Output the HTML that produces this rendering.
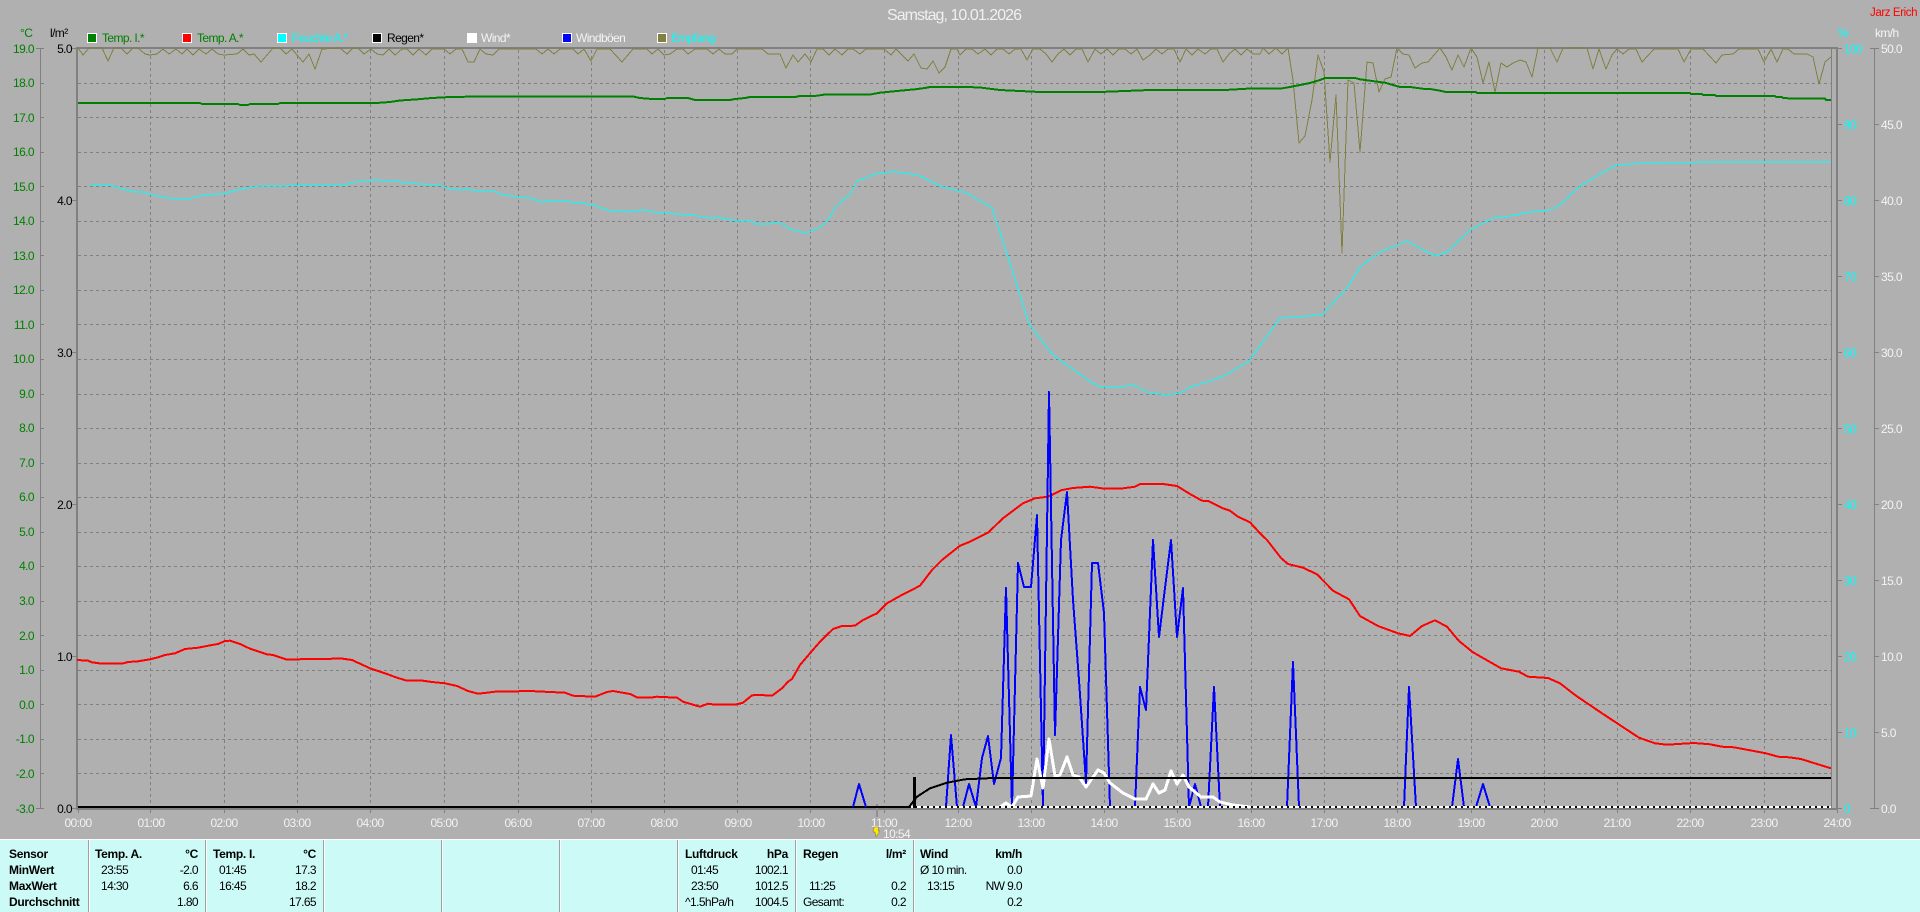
<!DOCTYPE html>
<html lang="de"><head><meta charset="utf-8"><title>Samstag, 10.01.2026</title>
<style>
html,body{margin:0;padding:0;background:#b0b0b0;width:1920px;height:912px;overflow:hidden}
svg{display:block}
text{font-family:"Liberation Sans",sans-serif;font-size:12px;letter-spacing:-.6px}
.b{font-weight:bold;font-size:12px;letter-spacing:-.3px;fill:#000}
.t{fill:#000}
.e{text-anchor:end}
.m{text-anchor:middle;fill:#f2f2f2}
.g{fill:#008000;text-anchor:end}
.k{fill:#000;text-anchor:end}
.c{fill:#0ff}
.w{fill:#f4f4f4}
polyline{fill:none;shape-rendering:crispEdges;stroke-linejoin:round}
</style></head><body>
<svg width="1920" height="912" viewBox="0 0 1920 912" xmlns="http://www.w3.org/2000/svg">
<rect width="1920" height="912" fill="#b0b0b0"/>
<text x="887" y="20" style="font-size:16px;letter-spacing:-.95px" fill="#f0f0f0">Samstag, 10.01.2026</text>
<text x="1870" y="16" style="font-size:11.5px;letter-spacing:-.4px" fill="#f00">Jarz Erich</text>

<text x="20" y="37" fill="#008000">°C</text>
<text x="50" y="37" fill="#000">l/m²</text>
<text x="1838" y="37" class="c">%</text>
<text x="1875" y="37" class="w">km/h</text>

<!-- legend -->
<g stroke="#fff" stroke-width="1" shape-rendering="crispEdges">
<rect x="87.5" y="33.5" width="9" height="9" fill="#008000"/>
<rect x="182.5" y="33.5" width="9" height="9" fill="#f00"/>
<rect x="277.5" y="33.5" width="9" height="9" fill="#0ff"/>
<rect x="372.5" y="33.5" width="9" height="9" fill="#000"/>
<rect x="467.5" y="33.5" width="9" height="9" fill="#fff"/>
<rect x="562.5" y="33.5" width="9" height="9" fill="#00f"/>
<rect x="657.5" y="33.5" width="9" height="9" fill="#808040"/>
</g>
<text x="102" y="42" fill="#008000">Temp. I.*</text>
<text x="197" y="42" fill="#008000">Temp. A.*</text>
<text x="292" y="42" class="c">Feuchte A.*</text>
<text x="387" y="42" fill="#000">Regen*</text>
<text x="481" y="42" class="w">Wind*</text>
<text x="576" y="42" class="w">Windböen</text>
<text x="671" y="42" class="c">Empfang</text>

<!-- grid -->
<path shape-rendering="crispEdges" stroke="#808080" stroke-width="1" stroke-dasharray="3 3" fill="none" d="M78 83.5H1831M78 117.5H1831M78 152.5H1831M78 186.5H1831M78 221.5H1831M78 255.5H1831M78 290.5H1831M78 324.5H1831M78 359.5H1831M78 394.5H1831M78 428.5H1831M78 463.5H1831M78 497.5H1831M78 532.5H1831M78 566.5H1831M78 601.5H1831M78 635.5H1831M78 670.5H1831M78 704.5H1831M78 739.5H1831M78 773.5H1831M150.5 50V808M224.5 50V808M297.5 50V808M370.5 50V808M444.5 50V808M518.5 50V808M591.5 50V808M664.5 50V808M737.5 50V808M810.5 50V808M884.5 50V808M958.5 50V808M1031.5 50V808M1104.5 50V808M1177.5 50V808M1251.5 50V808M1324.5 50V808M1397.5 50V808M1471.5 50V808M1544.5 50V808M1617.5 50V808M1690.5 50V808M1764.5 50V808"/>

<!-- axes -->
<g shape-rendering="crispEdges" fill="#808080">
<rect x="76" y="47" width="1762" height="2"/>
<rect x="76" y="47" width="2" height="762"/>
<rect x="76" y="808" width="1762" height="2"/>
<rect x="1831" y="48" width="1" height="760"/>
<rect x="1836" y="47" width="2" height="763"/>
<rect x="40" y="48" width="1" height="761"/>
<rect x="1874" y="48" width="1" height="761"/>
</g>
<path shape-rendering="crispEdges" stroke="#808080" fill="none" d="M36 48.5H44M40 83.5H44M40 117.5H44M40 152.5H44M40 186.5H44M40 221.5H44M40 255.5H44M40 290.5H44M40 324.5H44M40 359.5H44M40 394.5H44M40 428.5H44M40 463.5H44M40 497.5H44M40 532.5H44M40 566.5H44M40 601.5H44M40 635.5H44M40 670.5H44M40 704.5H44M40 739.5H44M40 773.5H44M36 808.5H44M72 48.5H76M72 200.5H76M72 352.5H76M72 504.5H76M72 656.5H76M72 808.5H76M1838 48.5H1842M1838 124.5H1842M1838 200.5H1842M1838 276.5H1842M1838 352.5H1842M1838 428.5H1842M1838 504.5H1842M1838 580.5H1842M1838 656.5H1842M1838 732.5H1842M1838 808.5H1842M1870 48.5H1879M1874 124.5H1879M1874 200.5H1879M1874 276.5H1879M1874 352.5H1879M1874 428.5H1879M1874 504.5H1879M1874 580.5H1879M1874 656.5H1879M1874 732.5H1879M1870 808.5H1879M78.5 810V813M150.5 810V813M224.5 810V813M297.5 810V813M370.5 810V813M444.5 810V813M518.5 810V813M591.5 810V813M664.5 810V813M737.5 810V813M810.5 810V813M884.5 810V813M958.5 810V813M1031.5 810V813M1104.5 810V813M1177.5 810V813M1251.5 810V813M1324.5 810V813M1397.5 810V813M1471.5 810V813M1544.5 810V813M1617.5 810V813M1690.5 810V813M1764.5 810V813M1837.5 810V813"/>
<rect x="876" y="804" width="2" height="13" fill="#909090" shape-rendering="crispEdges"/>

<!-- y labels: temperature -->
<text x="34" y="53" class="g">19.0</text><text x="34" y="87" class="g">18.0</text><text x="34" y="122" class="g">17.0</text><text x="34" y="156" class="g">16.0</text><text x="34" y="191" class="g">15.0</text><text x="34" y="225" class="g">14.0</text><text x="34" y="260" class="g">13.0</text><text x="34" y="294" class="g">12.0</text><text x="34" y="329" class="g">11.0</text><text x="34" y="363" class="g">10.0</text><text x="34" y="398" class="g">9.0</text><text x="34" y="432" class="g">8.0</text><text x="34" y="467" class="g">7.0</text><text x="34" y="501" class="g">6.0</text><text x="34" y="536" class="g">5.0</text><text x="34" y="570" class="g">4.0</text><text x="34" y="605" class="g">3.0</text><text x="34" y="640" class="g">2.0</text><text x="34" y="674" class="g">1.0</text><text x="34" y="709" class="g">0.0</text><text x="34" y="743" class="g">-1.0</text><text x="34" y="778" class="g">-2.0</text><text x="34" y="813" class="g">-3.0</text>
<!-- y labels: rain -->
<text x="72" y="53" class="k">5.0</text><text x="72" y="205" class="k">4.0</text><text x="72" y="357" class="k">3.0</text><text x="72" y="509" class="k">2.0</text><text x="72" y="661" class="k">1.0</text><text x="72" y="813" class="k">0.0</text>
<!-- y labels: humidity -->
<text x="1844" y="53" class="c">100</text><text x="1844" y="129" class="c">90</text><text x="1844" y="205" class="c">80</text><text x="1844" y="281" class="c">70</text><text x="1844" y="357" class="c">60</text><text x="1844" y="433" class="c">50</text><text x="1844" y="509" class="c">40</text><text x="1844" y="585" class="c">30</text><text x="1844" y="661" class="c">20</text><text x="1844" y="737" class="c">10</text><text x="1844" y="813" class="c">0</text>
<!-- y labels: wind -->
<text x="1881" y="53" class="w">50.0</text><text x="1881" y="129" class="w">45.0</text><text x="1881" y="205" class="w">40.0</text><text x="1881" y="281" class="w">35.0</text><text x="1881" y="357" class="w">30.0</text><text x="1881" y="433" class="w">25.0</text><text x="1881" y="509" class="w">20.0</text><text x="1881" y="585" class="w">15.0</text><text x="1881" y="661" class="w">10.0</text><text x="1881" y="737" class="w">5.0</text><text x="1881" y="813" class="w">0.0</text>
<!-- x labels -->
<text x="78" y="827" class="m">00:00</text><text x="151" y="827" class="m">01:00</text><text x="224" y="827" class="m">02:00</text><text x="297" y="827" class="m">03:00</text><text x="370" y="827" class="m">04:00</text><text x="444" y="827" class="m">05:00</text><text x="518" y="827" class="m">06:00</text><text x="591" y="827" class="m">07:00</text><text x="664" y="827" class="m">08:00</text><text x="738" y="827" class="m">09:00</text><text x="811" y="827" class="m">10:00</text><text x="884" y="827" class="m">11:00</text><text x="958" y="827" class="m">12:00</text><text x="1031" y="827" class="m">13:00</text><text x="1104" y="827" class="m">14:00</text><text x="1177" y="827" class="m">15:00</text><text x="1251" y="827" class="m">16:00</text><text x="1324" y="827" class="m">17:00</text><text x="1397" y="827" class="m">18:00</text><text x="1471" y="827" class="m">19:00</text><text x="1544" y="827" class="m">20:00</text><text x="1617" y="827" class="m">21:00</text><text x="1690" y="827" class="m">22:00</text><text x="1764" y="827" class="m">23:00</text><text x="1837" y="827" class="m">24:00</text>

<!-- Empfang -->
<polyline stroke="#808040" stroke-width="1" points="78,48 83,55 89,48 102,48 108,61 114,48 121,48 127,54 133,48 138,48 145,54 150,55 157,54 163,49 169,54 176,49 182,54 187,49 193,55 199,49 206,54 212,49 218,54 224,55 237,54 243,49 249,55 254,54 261,62 273,48 280,48 286,54 292,49 297,55 303,62 309,54 315,69 322,49 340,48 347,54 353,48 358,48 364,54 371,49 377,54 383,55 389,49 395,55 402,49 407,49 413,55 419,49 426,55 432,49 444,49 450,54 456,49 462,49 468,62 474,62 480,49 486,54 493,55 499,49 536,49 542,54 548,49 554,54 560,49 573,49 578,54 584,49 591,61 597,49 610,49 622,62 633,49 647,49 652,54 658,49 664,55 670,54 677,49 683,49 688,54 695,49 707,49 713,54 719,49 725,54 732,54 737,49 762,49 768,54 780,54 786,68 793,55 798,62 805,54 811,62 817,49 823,49 829,55 835,49 842,55 848,49 853,49 860,54 866,49 884,49 891,55 896,49 908,61 914,54 921,68 927,69 933,61 939,73 945,67 951,49 957,49 960,55 966,49 972,49 978,54 985,49 991,55 997,49 1003,49 1009,54 1015,49 1021,49 1027,60 1033,49 1040,49 1046,54 1052,62 1058,54 1064,49 1070,55 1076,49 1082,49 1088,62 1095,49 1101,54 1107,49 1113,55 1119,49 1125,49 1131,54 1137,49 1143,60 1150,55 1156,49 1162,54 1168,49 1174,49 1180,62 1186,49 1192,55 1198,49 1205,54 1211,49 1217,49 1223,62 1229,54 1235,49 1241,55 1247,49 1253,54 1260,54 1263,48 1269,54 1276,48 1282,54 1288,48 1293,80 1299,143 1305,136 1312,100 1318,55 1324,72 1330,162 1336,95 1342,253 1348,80 1354,83 1360,152 1367,62 1373,63 1379,92 1385,79 1391,77 1397,48 1403,54 1409,55 1415,68 1422,63 1428,62 1440,48 1446,57 1452,70 1458,55 1464,67 1471,48 1477,57 1483,83 1489,62 1495,92 1501,63 1507,67 1513,63 1520,60 1526,62 1532,77 1538,48 1550,48 1557,62 1563,48 1587,48 1593,69 1599,49 1606,69 1612,55 1617,49 1623,54 1629,49 1636,49 1642,62 1654,49 1678,49 1684,62 1691,49 1703,49 1716,63 1722,55 1733,54 1739,49 1758,49 1764,62 1771,49 1777,62 1783,49 1788,49 1794,54 1807,54 1813,57 1819,84 1825,62 1831,57"/>
<!-- Temp I -->
<polyline stroke="#008000" stroke-width="2" points="78,103 200,103 202,104 238,104 240,105 248,105 250,104 278,104 280,103 376,103 390,102 400,100.5 415,99.5 432,98 450,97 480,96.5 633,96.5 640,98 652,99 665,99 667,98 688,98 695,100 730,100 735,99 745,98 750,97 795,97 800,96 815,96 825,94.5 870,94.5 880,92.7 890,91.7 900,90.7 915,89.3 925,88 930,87 967,87 980,87.5 1000,90 1040,92 1100,92 1150,90 1225,90 1250,88.5 1280,88.7 1290,87 1300,85 1310,83 1320,80 1325,78 1355,78 1360,79.3 1370,80.7 1385,82.7 1393,85 1400,87 1410,87 1425,89 1430,89 1440,90.7 1446,92 1476,92 1477,93 1690,93 1691,94 1702,94 1703,95 1715,95 1716,96 1775,96 1776,97 1782,97 1783,98 1795,98.7 1825,98.7 1826,100 1831,100"/>
<!-- Temp A -->
<polyline stroke="#f00" stroke-width="2" points="77,660 88,660.7 92,662.3 102,663.7 122,663.7 128,662 138,661.3 150,659.3 158,657.3 165,655 175,653.3 185,649 198,647.7 212,645 218,644 225,641 230,640.7 240,644 250,648.7 267,654.3 273,655 287,659.7 297,659.3 335,658.7 340,658.3 352,660 370,668.3 385,673.3 397,677.7 407,680.7 420,680.3 432,682 445,683.3 457,686 468,691 478,693.7 487,692.7 495,691.7 512,691.7 517,691.3 530,691 550,692 565,692.7 573,695.7 595,696.7 607,692 613,691 630,694 637,697.3 653,697.3 657,696.7 677,697.7 683,701.7 700,706.7 708,703.7 715,704.7 735,704.7 743,702.7 752,695.3 760,695 772,695.7 782,688.3 788,681.7 792,679 800,665 810,653.3 820,641.7 833,629 842,626 855,625.7 863,620 877,613.3 887,603.3 900,596 920,585.7 932,570 942,560 960,545.7 970,541.7 988,532.7 1003,518.3 1023,503.3 1035,498.3 1048,496.7 1062,490 1073,488 1090,486.7 1105,488.7 1123,488.3 1135,486.7 1140,484 1163,484 1177,486 1190,494 1202,500.7 1208,501 1223,508.3 1230,510.7 1238,516.7 1250,522.3 1260,533.3 1267,540 1281,558 1288,564 1303,567.7 1317,574.3 1333,590.7 1349,599.3 1360,616 1378,626 1398,633.3 1410,636 1422,626 1435,620.3 1447,626.7 1459,641 1473,652.3 1501,668.3 1519,671.7 1528,676.7 1548,678 1560,683.3 1576,695.7 1602,713.3 1639,737.7 1655,743.3 1667,744.7 1694,743 1710,744.3 1722,746.7 1734,747.3 1766,753.3 1778,756.7 1789,757.3 1801,759 1817,764 1831,768.3"/>
<!-- Feuchte -->
<polyline stroke="#0ff" stroke-width="1" points="90,185.7 112,185.7 119,188 134,192 141,191.7 153,195 163,197.3 177,198.7 189,198.7 199,196 211,194.3 224,194 233,191 245,188.3 260,186 344,185.3 352,182.7 364,180.7 376,180 388,181.7 395,180.7 405,182.7 424,184.3 439,184.7 449,188.7 463,190 468,189 475,190.7 495,191.7 502,194.7 517,196.7 534,198.7 542,202.3 550,200.7 558,201.3 567,200.7 574,203.3 580,202 587,204.3 594,204.7 604,209.3 616,211.7 622,210 628,212.3 633,210.7 645,210 655,212.3 676,214 691,214.7 698,216 710,218.3 718,217.3 735,220.7 752,221.3 756,224.3 781,223.3 790,229 805,233 812,231 822,226 829,218.3 836,206.7 844,199 850,195 857,181 875,174 894,171.5 918,175 943,187 967,193 992,208 1010,263 1029,324 1053,355 1078,373 1088,380 1100,387 1120,387 1133,385 1147,392 1167,395 1180,393 1190,387 1213,380 1224,376 1249,361 1280,318 1322,315 1347,288 1352,280 1360,267 1380,252 1397,245 1407,241 1420,248 1435,256 1447,252 1470,230 1493,218 1510,216 1530,212 1550,210 1560,205 1580,186 1616,165 1647,163 1714,162 1831,162"/>
<!-- base rain -->
<path shape-rendering="crispEdges" stroke="#000" stroke-width="2" d="M78 807H909"/>
<!-- Windböen -->
<g stroke="#00f" stroke-width="2">
<polyline points="853,807 859,784 866,807"/>
<polyline points="946,807 951,735 957,807"/>
<polyline points="963,807 969,784 976,807 982,758 988,736 994,784 1001,758 1006,588 1012,807 1018,563 1024,587 1031,587 1037,515 1043,807 1049,392 1055,735 1061,540 1067,492 1073,600 1079,680 1086,783 1092,563 1098,563 1104,613 1110,807 1135,807 1140,687 1146,710 1153,540 1159,637 1165,588 1171,540 1177,637 1183,588 1189,807 1195,784 1201,807 1208,807 1214,687 1220,807 1245,807"/>
<polyline points="1287,807 1293,662 1299,807"/>
<polyline points="1404,807 1409,687 1416,807"/>
<polyline points="1452,807 1458,759 1464,807"/>
<polyline points="1476,807 1483,784 1490,807"/>
</g>
<!-- Wind -->
<polyline stroke="#fff" stroke-width="3" points="1000,807 1006,803 1012,807 1018,797 1031,796 1037,759 1043,788 1049,739 1055,776 1060,775 1067,757 1073,775 1079,777 1086,787 1098,770 1104,773 1110,783 1123,793 1135,799 1146,799 1153,784 1159,793 1165,790 1171,771 1177,784 1183,775 1189,787 1201,797 1213,797 1220,802 1233,805 1250,807"/>
<path shape-rendering="crispEdges" stroke="#fff" stroke-width="2" d="M909 807H1831"/>
<path shape-rendering="crispEdges" stroke="#000" stroke-width="2" stroke-dasharray="2 4" d="M909 807H1831"/>
<!-- Regen -->
<polyline stroke="#000" stroke-width="2" points="909,807 917,796.7 930,788.3 947,782.7 965,779.3 993,778 1831,778"/>
<rect x="913" y="777" width="3" height="31" fill="#000" shape-rendering="crispEdges"/>

<!-- lightning -->
<polygon points="874,827 879,827 878,831 880,831 876,837 875,832 873,832" fill="#ffe800" stroke="#555" stroke-width=".4"/>
<text x="883" y="838" class="w">10:54</text>

<!-- panel -->
<rect x="0" y="839" width="1920" height="73" fill="#ccfbf7"/>
<rect x="0" y="839" width="1920" height="1" fill="#fff"/>
<path shape-rendering="crispEdges" stroke="#a0a0a0" d="M88.500 840V912M205.500 840V912M323.500 840V912M441.500 840V912M559.500 840V912M677.500 840V912M795.500 840V912M913.500 840V912"/>
<path shape-rendering="crispEdges" stroke="#fff" d="M89.500 840V912M206.500 840V912M324.500 840V912M442.500 840V912M560.500 840V912M678.500 840V912M796.500 840V912M914.500 840V912"/>

<text x="9" y="858" class="b">Sensor</text><text x="9" y="874" class="b">MinWert</text><text x="9" y="890" class="b">MaxWert</text><text x="9" y="906" class="b">Durchschnitt</text>

<text x="95" y="858" class="b">Temp. A.</text><text x="198" y="858" class="b e">°C</text>
<text x="101" y="874" class="t">23:55</text><text x="198" y="874" class="t e">-2.0</text>
<text x="101" y="890" class="t">14:30</text><text x="198" y="890" class="t e">6.6</text>
<text x="198" y="906" class="t e">1.80</text>

<text x="213" y="858" class="b">Temp. I.</text><text x="316" y="858" class="b e">°C</text>
<text x="219" y="874" class="t">01:45</text><text x="316" y="874" class="t e">17.3</text>
<text x="219" y="890" class="t">16:45</text><text x="316" y="890" class="t e">18.2</text>
<text x="316" y="906" class="t e">17.65</text>

<text x="685" y="858" class="b">Luftdruck</text><text x="788" y="858" class="b e">hPa</text>
<text x="691" y="874" class="t">01:45</text><text x="788" y="874" class="t e">1002.1</text>
<text x="691" y="890" class="t">23:50</text><text x="788" y="890" class="t e">1012.5</text>
<text x="685" y="906" class="t">^1.5hPa/h</text><text x="788" y="906" class="t e">1004.5</text>

<text x="803" y="858" class="b">Regen</text><text x="906" y="858" class="b e">l/m²</text>
<text x="809" y="890" class="t">11:25</text><text x="906" y="890" class="t e">0.2</text>
<text x="803" y="906" class="t">Gesamt:</text><text x="906" y="906" class="t e">0.2</text>

<text x="920" y="858" class="b">Wind</text><text x="1022" y="858" class="b e">km/h</text>
<text x="920" y="874" class="t">Ø 10 min.</text><text x="1022" y="874" class="t e">0.0</text>
<text x="927" y="890" class="t">13:15</text><text x="1022" y="890" class="t e">NW 9.0</text>
<text x="1022" y="906" class="t e">0.2</text>
</svg>
</body></html>
